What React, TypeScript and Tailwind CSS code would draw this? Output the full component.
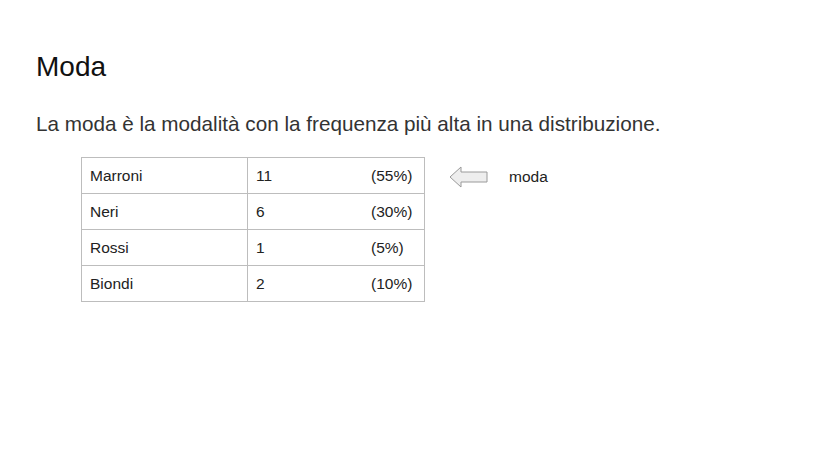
const rows = [
  { name: "Marroni", n: "11", pct: "(55%)" },
  { name: "Neri", n: "6", pct: "(30%)" },
  { name: "Rossi", n: "1", pct: "(5%)" },
  { name: "Biondi", n: "2", pct: "(10%)" },
]

export default function App() {
  return (
    <div className="h-[466px] w-[828px] bg-white pl-9 pt-[48px] font-['Liberation_Sans',Arial,sans-serif]">
      <h1 className="text-[28px] leading-[38px] text-[#111]">Moda</h1>
      <p className="mt-[24px] text-[20.7px] leading-[28px] text-[#333]">
        La moda è la modalità con la frequenza più alta in una distribuzione.
      </p>

      <div className="mt-[19px] flex items-start">
        <table className="ml-[45px] border-collapse text-[15.5px] text-[#222]">
          <tbody>
            {rows.map((r) => (
              <tr key={r.name} className="h-[36px]">
                <td className="w-[166px] border border-[#bdbdbd] pl-[8px]">{r.name}</td>
                <td className="w-[177px] border border-[#bdbdbd] pl-[8px]">
                  <div className="flex">
                    <span className="w-[115px]">{r.n}</span>
                    <span>{r.pct}</span>
                  </div>
                </td>
              </tr>
            ))}
          </tbody>
        </table>

        <div className="ml-[24px] mt-[8px] flex items-center">
          <svg width="40" height="22" viewBox="0 0 40 22">
            <path
              d="M1 11 L12 1 L12 6 L38 6 L38 16 L12 16 L12 21 Z"
              fill="#eeeeee"
              stroke="#9a9a9a"
              strokeWidth="1"
              strokeLinejoin="miter"
            />
          </svg>
          <span className="ml-[20px] text-[15.5px] text-[#222]">moda</span>
        </div>
      </div>
    </div>
  )
}
